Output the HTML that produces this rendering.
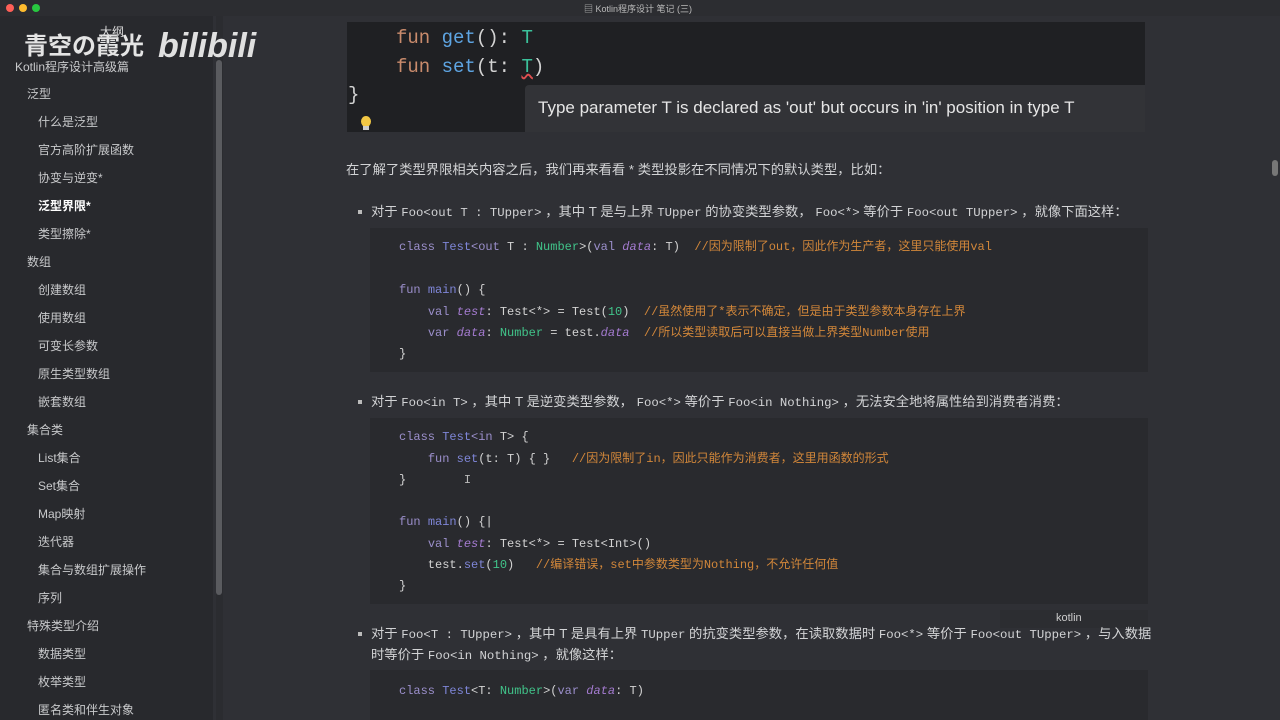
<!DOCTYPE html>
<html><head><meta charset="utf-8"><style>
*{margin:0;padding:0;box-sizing:border-box}
body{width:1280px;height:720px;overflow:hidden;background:#2f3035;font-family:"Liberation Sans","Noto Sans CJK SC",sans-serif;color:#cfd0d2;position:relative}
.abs{position:absolute;white-space:nowrap}
#side{position:absolute;left:0;top:0;width:213px;height:720px;background:#28292d}
#scroll{position:absolute;left:216px;top:0;width:7px;height:720px;background:#2b2c30}
#thumb{position:absolute;left:216px;top:60px;width:6px;height:535px;background:#5a5b5f;border-radius:3px}
.s1{position:absolute;left:27px;font-size:12px;color:#c8c9cb;line-height:16px}
.s2{position:absolute;left:38px;font-size:12px;color:#c8c9cb;line-height:16px}
.mono{font-family:"Liberation Mono","Noto Sans CJK SC",monospace}
.cb{position:absolute;left:370px;width:778px;background:#292a2e}
.cl{position:absolute;left:399px;font-size:12px;white-space:pre;color:#d3d3d3;line-height:16px}
.k{color:#9b8fcb}.t{color:#7e86d8}.n{color:#41c48a}.v{color:#a47bd0;font-style:italic}.c{color:#d2873a}.g{color:#7f86d8}
.p{position:absolute;font-size:13.3px;color:#d2d3d5;white-space:nowrap;line-height:18px}
.p .mono{font-size:12.3px}
.b{position:absolute;left:358px;width:4px;height:4px;background:#bbb}
</style></head><body>
<div id="side"></div><div id="scroll"></div><div id="thumb"></div>
<div class="abs" style="left:0;top:0;width:1280px;height:16px;background:#2c2d31"></div>
<div class="abs" style="left:6px;top:4px;width:8px;height:8px;border-radius:50%;background:#fe5f57"></div>
<div class="abs" style="left:19px;top:4px;width:8px;height:8px;border-radius:50%;background:#febc2e"></div>
<div class="abs" style="left:32px;top:4px;width:8px;height:8px;border-radius:50%;background:#28c840"></div>
<div class="abs" style="left:584px;top:2px;font-size:9px;color:#bbb">▤ Kotlin程序设计 笔记 (三)</div>
<div class="abs" style="left:24px;top:32px;font-size:24px;font-weight:bold;color:#e4e4e4;line-height:30px">青空の霞光</div>
<div class="abs" style="left:100px;top:25px;font-size:12px;color:#ddd;line-height:14px">大纲</div>
<div class="abs" style="left:158px;top:26px;font-size:34px;font-weight:bold;font-style:italic;color:#e0e0e0;line-height:40px">bilibili</div>
<div class="abs" style="left:15px;top:60px;font-size:12px;color:#c8c9cb;line-height:14px">Kotlin程序设计高级篇</div>
<div class="s1" style="top:86px">泛型</div>
<div class="s2" style="top:114px">什么是泛型</div>
<div class="s2" style="top:142px">官方高阶扩展函数</div>
<div class="s2" style="top:170px">协变与逆变*</div>
<div class="s2" style="top:198px;color:#fff;font-weight:bold">泛型界限*</div>
<div class="s2" style="top:226px">类型擦除*</div>
<div class="s1" style="top:254px">数组</div>
<div class="s2" style="top:282px">创建数组</div>
<div class="s2" style="top:310px">使用数组</div>
<div class="s2" style="top:338px">可变长参数</div>
<div class="s2" style="top:366px">原生类型数组</div>
<div class="s2" style="top:394px">嵌套数组</div>
<div class="s1" style="top:422px">集合类</div>
<div class="s2" style="top:450px">List集合</div>
<div class="s2" style="top:478px">Set集合</div>
<div class="s2" style="top:506px">Map映射</div>
<div class="s2" style="top:534px">迭代器</div>
<div class="s2" style="top:562px">集合与数组扩展操作</div>
<div class="s2" style="top:590px">序列</div>
<div class="s1" style="top:618px">特殊类型介绍</div>
<div class="s2" style="top:646px">数据类型</div>
<div class="s2" style="top:674px">枚举类型</div>
<div class="s2" style="top:702px">匿名类和伴生对象</div>
<div class="abs" style="left:1272px;top:160px;width:6px;height:16px;border-radius:3px;background:#777"></div>

<div class="abs" style="left:347px;top:22px;width:798px;height:110px;background:#1f2023"></div>
<div class="abs mono" style="left:396px;top:27px;font-size:19px;color:#d3d3d3;white-space:pre"><span style="color:#c98b6c">fun</span> <span style="color:#5ea5e3">get</span>(): <span style="color:#3bc19b">T</span></div>
<div class="abs mono" style="left:396px;top:56px;font-size:19px;color:#d3d3d3;white-space:pre"><span style="color:#c98b6c">fun</span> <span style="color:#5ea5e3">set</span>(t: <span style="color:#3bc19b;text-decoration:underline wavy #e05050">T</span>)</div>
<div class="abs mono" style="left:348px;top:84px;font-size:19px;color:#d3d3d3">}</div>
<div class="abs" style="left:361px;top:116px;width:10px;height:11px;border-radius:50%;background:#f2c744"></div>
<div class="abs" style="left:363px;top:126px;width:6px;height:4px;background:#ccc"></div>
<div class="abs" style="left:525px;top:85px;width:620px;height:47px;background:#323337;border-radius:4px 0 0 0"></div>
<div class="abs" style="left:538px;top:98px;font-size:17px;color:#e6e6e6">Type parameter T is declared as 'out' but occurs in 'in' position in type T</div>

<div class="p" style="left:346px;top:161px">在了解了类型界限相关内容之后，我们再来看看 * 类型投影在不同情况下的默认类型，比如：</div>
<div class="b" style="top:210px"></div>
<div class="p" style="left:371px;top:203px">对于 <span class="mono">Foo&lt;out T : TUpper&gt;</span> ，其中 T 是与上界 <span class="mono">TUpper</span> 的协变类型参数， <span class="mono">Foo&lt;*&gt;</span> 等价于 <span class="mono">Foo&lt;out TUpper&gt;</span> ，就像下面这样：</div>

<div class="cb" style="top:228px;height:144px"></div>
<div class="cl mono" style="top:239px"><span class="k">class</span> <span class="t">Test</span><span class="k">&lt;out</span> T : <span class="n">Number</span>&gt;(<span class="k">val</span> <span class="v">data</span>: T)  <span class="c">//因为限制了out，因此作为生产者，这里只能使用val</span></div>
<div class="cl mono" style="top:282px"><span class="k">fun</span> <span class="g">main</span>() {</div>
<div class="cl mono" style="top:304px">    <span class="k">val</span> <span class="v">test</span>: Test&lt;*&gt; = Test(<span class="n">10</span>)  <span class="c">//虽然使用了*表示不确定，但是由于类型参数本身存在上界</span></div>
<div class="cl mono" style="top:325px">    <span class="k">var</span> <span class="v">data</span>: <span class="n">Number</span> = test.<span class="v">data</span>  <span class="c">//所以类型读取后可以直接当做上界类型Number使用</span></div>
<div class="cl mono" style="top:346px">}</div>

<div class="b" style="top:400px"></div>
<div class="p" style="left:371px;top:393px">对于 <span class="mono">Foo&lt;in T&gt;</span> ，其中 T 是逆变类型参数， <span class="mono">Foo&lt;*&gt;</span> 等价于 <span class="mono">Foo&lt;in Nothing&gt;</span> ，无法安全地将属性给到消费者消费：</div>

<div class="cb" style="top:418px;height:186px"></div>
<div class="cl mono" style="top:429px"><span class="k">class</span> <span class="t">Test</span><span class="k">&lt;in</span> T&gt; {</div>
<div class="cl mono" style="top:451px">    <span class="k">fun</span> <span class="g">set</span>(t: T) { }   <span class="c">//因为限制了in，因此只能作为消费者，这里用函数的形式</span></div>
<div class="cl mono" style="top:472px">}        <span style="color:#bbb">I</span></div>
<div class="cl mono" style="top:514px"><span class="k">fun</span> <span class="g">main</span>() {<span style="color:#ddd">|</span></div>
<div class="cl mono" style="top:536px">    <span class="k">val</span> <span class="v">test</span>: Test&lt;*&gt; = Test&lt;Int&gt;()</div>
<div class="cl mono" style="top:557px">    test.<span class="g">set</span>(<span class="n">10</span>)   <span class="c">//编译错误，set中参数类型为Nothing，不允许任何值</span></div>
<div class="cl mono" style="top:578px">}</div>
<div class="abs" style="left:1000px;top:610px;width:148px;height:18px;background:#2c2d31"></div>
<div class="abs" style="left:1056px;top:612px;font-size:11px;color:#ccc">kotlin</div>

<div class="b" style="top:632px"></div>
<div class="p" style="left:371px;top:625px">对于 <span class="mono">Foo&lt;T : TUpper&gt;</span> ，其中 T 是具有上界 <span class="mono">TUpper</span> 的抗变类型参数，在读取数据时 <span class="mono">Foo&lt;*&gt;</span> 等价于 <span class="mono">Foo&lt;out TUpper&gt;</span> ，与入数据</div>
<div class="p" style="left:371px;top:646px">时等价于 <span class="mono">Foo&lt;in Nothing&gt;</span> ，就像这样：</div>

<div class="cb" style="top:670px;height:50px"></div>
<div class="cl mono" style="top:683px"><span class="k">class</span> <span class="t">Test</span>&lt;T: <span class="n">Number</span>&gt;(<span class="k">var</span> <span class="v">data</span>: T)</div>
</body></html>
